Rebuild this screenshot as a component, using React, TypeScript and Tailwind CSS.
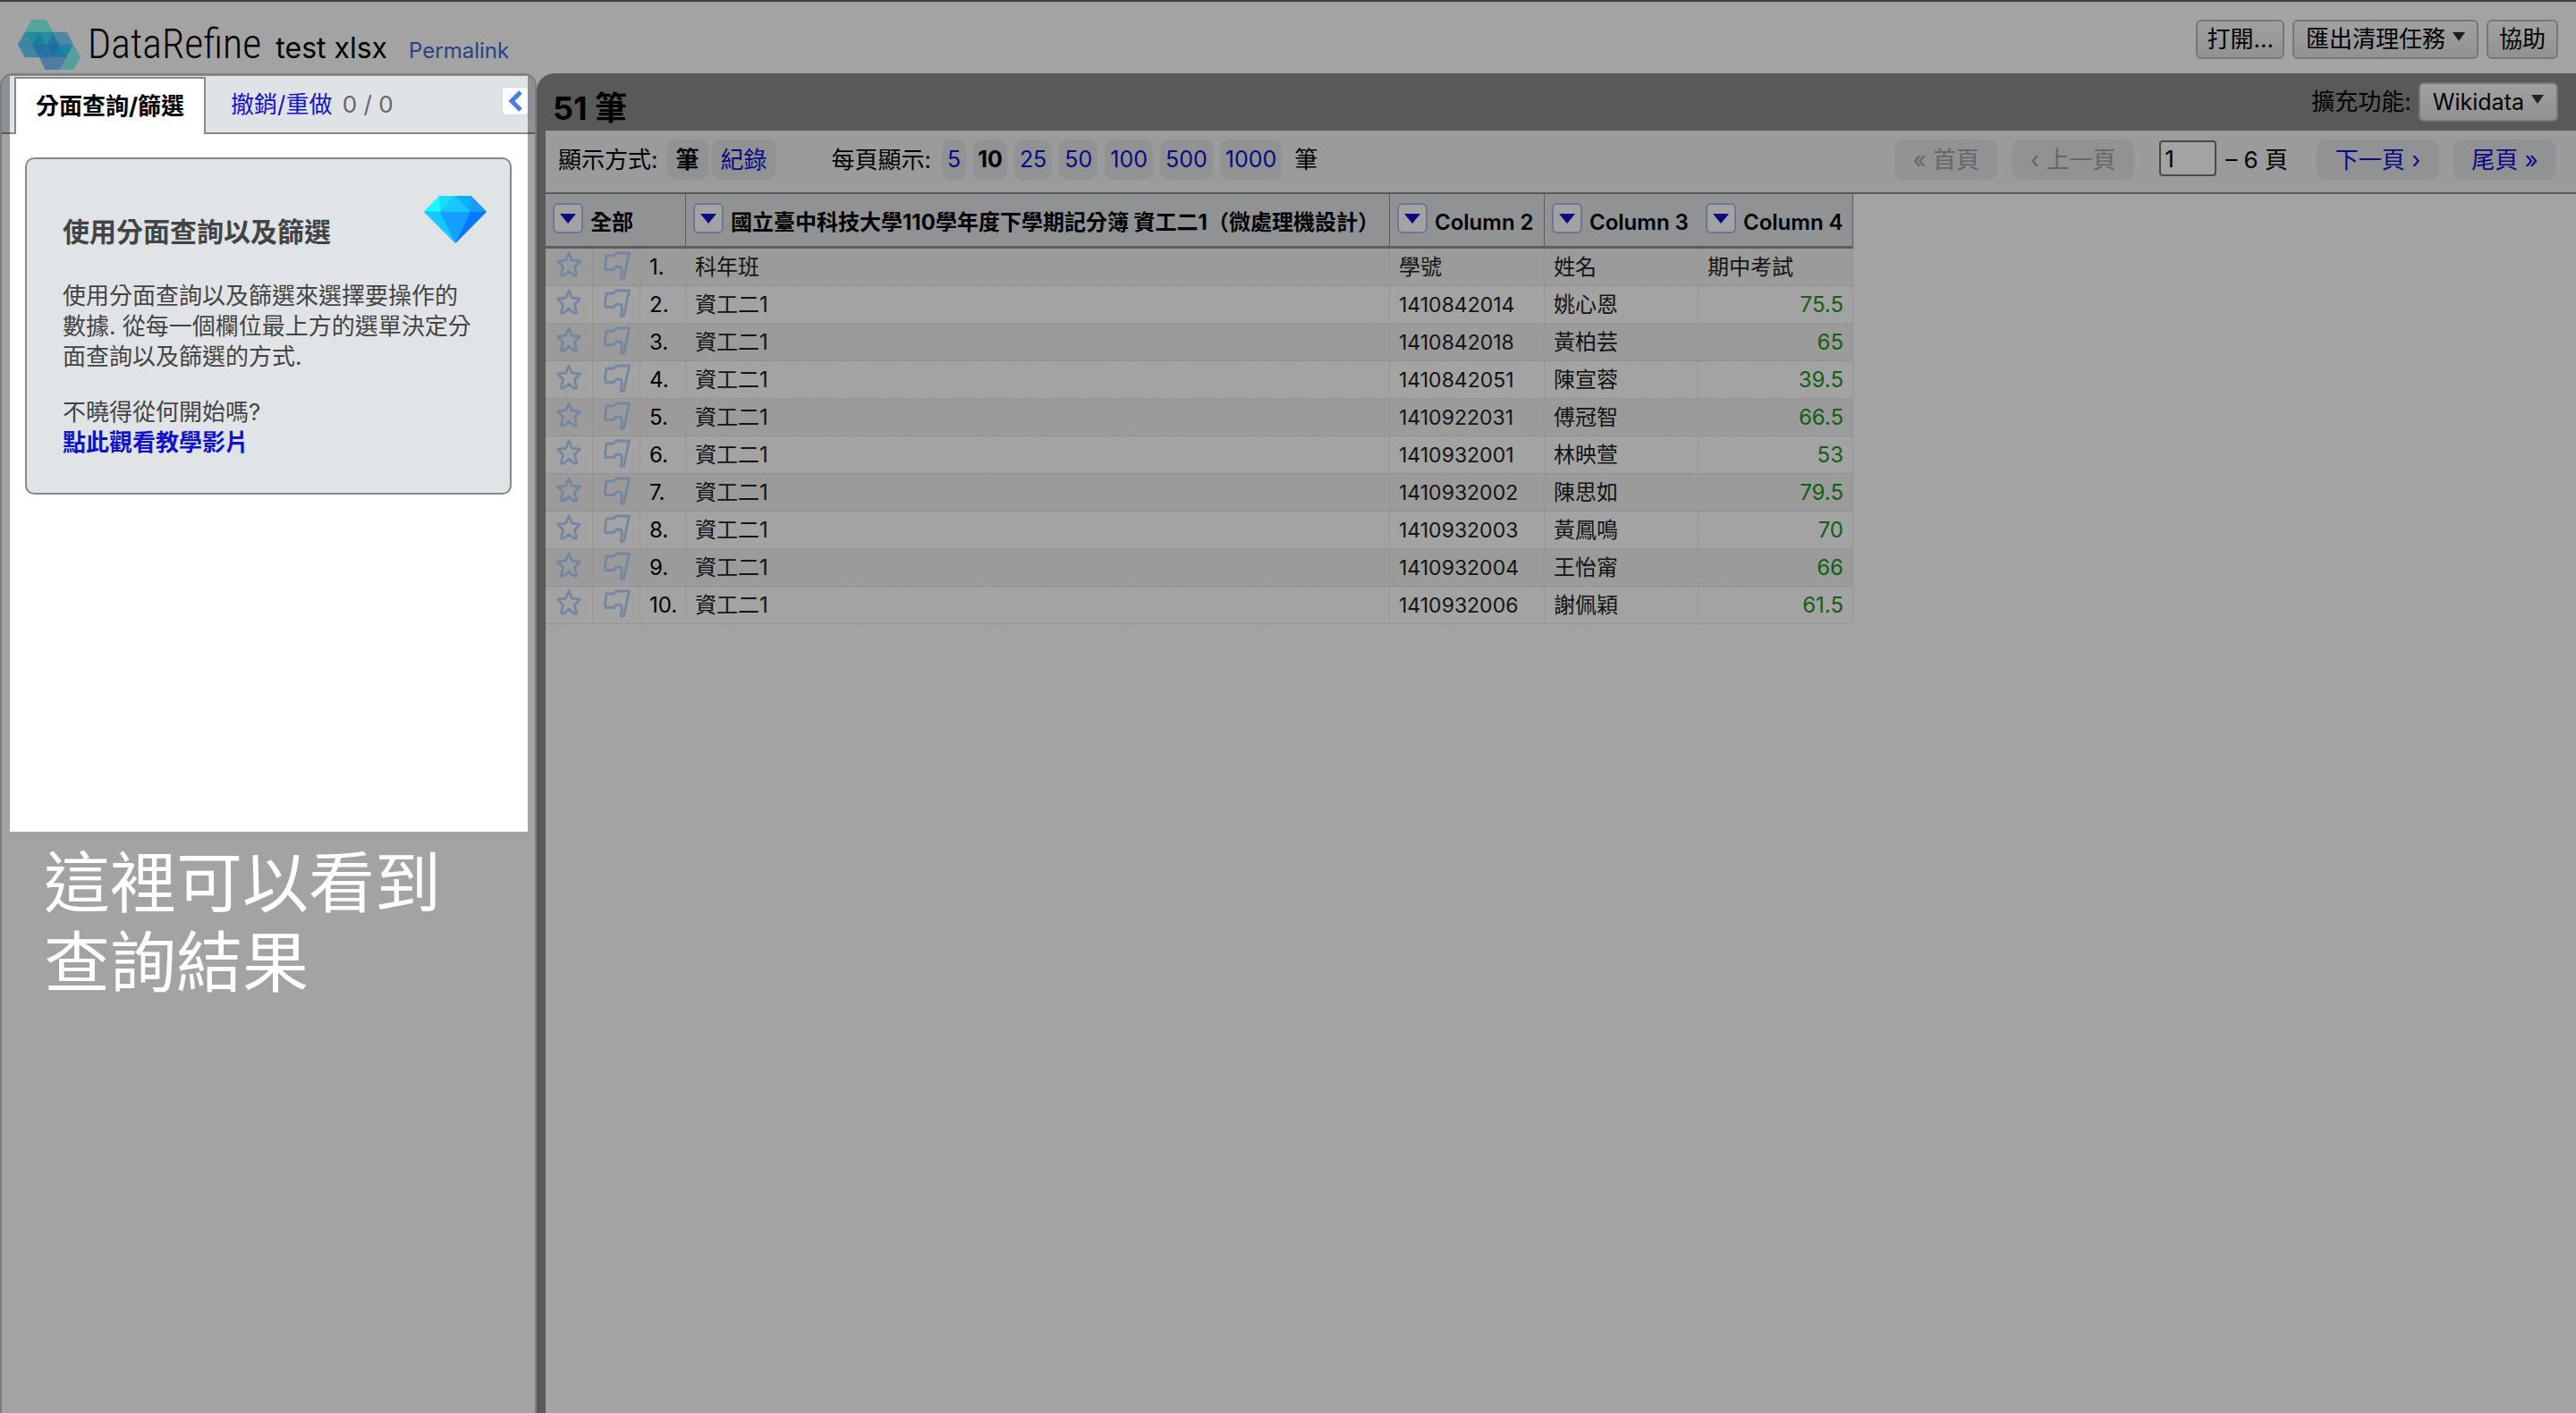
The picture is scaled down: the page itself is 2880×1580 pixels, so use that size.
import React from "react";

const rows = [
  ["科年班", "學號", "姓名", "期中考試"],
  ["資工二1", "1410842014", "姚心恩", "75.5"],
  ["資工二1", "1410842018", "黃柏芸", "65"],
  ["資工二1", "1410842051", "陳宣蓉", "39.5"],
  ["資工二1", "1410922031", "傅冠智", "66.5"],
  ["資工二1", "1410932001", "林映萱", "53"],
  ["資工二1", "1410932002", "陳思如", "79.5"],
  ["資工二1", "1410932003", "黃鳳鳴", "70"],
  ["資工二1", "1410932004", "王怡甯", "66"],
  ["資工二1", "1410932006", "謝佩穎", "61.5"],
];

const logoFaces: [string, string][] = [
  ["76,24 124,24 148,66 54,66", "#88fff8"],
  ["54,66 78,108 30,108", "#64d0ff"],
  ["54,66 102,66 78,108", "#30def8"],
  ["102,66 126,108 78,108", "#28c6f6"],
  ["102,66 148,66 126,108", "#3adefc"],
  ["148,66 170,108 126,108", "#3cbcfa"],
  ["148,66 194,66 216,108 170,108", "#7cd4ff"],
  ["30,108 78,108 102,150 54,150", "#64d0ff"],
  ["78,108 126,108 102,150", "#32b0fe"],
  ["126,108 150,150 102,150", "#4aaeff"],
  ["126,108 170,108 150,150", "#28acff"],
  ["170,108 194,150 150,150", "#30c0f8"],
  ["170,108 216,108 194,150", "#30d2fa"],
  ["216,108 240,150 194,150", "#85fbee"],
  ["102,150 194,150 170,192 122,192", "#7dc2ff"],
  ["194,150 240,150 216,192 170,192", "#85fbee"],
];

function Logo() {
  return (
    <svg className="h-14 w-[70px] shrink-0" viewBox="30 24 210 168" aria-hidden="true">
      {logoFaces.map(([points, fill]) => (
        <polygon key={points} points={points} fill={fill} stroke={fill} strokeWidth="1" />
      ))}
    </svg>
  );
}

function Diamond() {
  return (
    <svg className="h-[53px] w-[70px]" viewBox="42 57 209 158" aria-hidden="true">
      <path d="M94 57H199L251 110L147 215L42 110Z" fill="#14a0ff" />
      <path d="M94 57L42 110H96Z" fill="#18ffff" />
      <path d="M94 57H147L96 110Z" fill="#14deff" />
      <path d="M147 57L198 110H96Z" fill="#16c8ff" />
      <path d="M147 57H199V110Z" fill="#08b0ff" />
      <path d="M199 57L251 110H198Z" fill="#149cff" />
      <path d="M42 110H96L147 215Z" fill="#16c8ff" />
      <path d="M198 110H251L147 215Z" fill="#0878ff" />
    </svg>
  );
}

function Star() {
  return (
    <svg className="block h-[30px] w-[30px]" viewBox="0 0 30 30" fill="none" stroke="#b6d4fa" strokeWidth="2.8" strokeLinejoin="round" aria-hidden="true">
      <path d="M15 2L18.6 10.2L27.5 11.2L21.4 17.4L23.8 27L20.5 27L15 22.2L9.5 27L6.2 27L8.6 17.4L2.5 11.2L11.4 10.2Z" />
    </svg>
  );
}

function Flag() {
  return (
    <svg className="block h-8 w-8" viewBox="0 0 32 32" fill="none" stroke="#b6d4fa" strokeWidth="2.8" strokeLinejoin="round" strokeLinecap="round" aria-hidden="true">
      <path d="M4 5H12L15 2H29.5L27 13L23.5 30L20.5 30.5L20 29L21.5 22L20.5 17.5L15 17L12 20.5H3L2.5 16Z" />
    </svg>
  );
}

function Menu({ label }: { label: string }) {
  return (
    <button aria-label={label} className="flex h-[34px] w-[34px] shrink-0 items-center justify-center rounded-md border-2 border-[#b0b6ec] bg-white">
      <svg className="h-[11px] w-[18px]" viewBox="0 0 18 11" aria-hidden="true">
        <path d="M0 0H18L9 11Z" fill="#1010cc" />
      </svg>
    </button>
  );
}

function Caret() {
  return (
    <svg className="mb-1.5 h-2.5 w-3.5" viewBox="0 0 14 10" aria-hidden="true">
      <path d="M0 0H14L7 10Z" fill="#333" />
    </svg>
  );
}

const toolButton =
  "flex h-11 items-center rounded-md border-2 border-[#bbb] bg-linear-to-b from-[#fbfbfb] to-[#e4e4e4] text-black";
const pill = "flex h-[45px] items-center justify-center rounded-[10px] bg-[#e1e4e8]";
const th = "h-[61px] border-b-3 border-[#8f8f8f] bg-[#e1e4e8] p-0 text-left font-bold";
const td = "h-[42px] border-b border-dotted border-b-[#cfcfcf] border-r border-r-[#dadada] py-0";

function Header() {
  return (
    <header className="flex h-[82px] items-start justify-between border-t-2 border-[#646464] bg-white pr-5 pl-5">
      <div className="flex items-start pt-5">
        <Logo />
        <h1 className="ml-2 flex items-baseline leading-[54px]">
          <a href="#home" className="font-['Liberation_Sans_Narrow','Roboto_Condensed','Roboto'] text-[46px] font-light text-black">
            DataRefine
          </a>
          <span className="ml-4 text-[32px]">test xlsx</span>
          <a href="#permalink" className="ml-6 text-[24px] text-[#3f6ad0]">
            Permalink
          </a>
        </h1>
      </div>
      <div className="flex gap-[9px] pt-5">
        <button className={toolButton + " px-2.5"}>打開...</button>
        <button className={toolButton + " gap-2 px-[13px]"}>
          匯出清理任務
          <Caret />
        </button>
        <button className={toolButton + " px-3"}>協助</button>
      </div>
    </header>
  );
}

function Sidebar() {
  return (
    <aside className="w-[600px] shrink-0 rounded-t-[14px] border-2 border-b-0 border-[#c4c4c4] bg-white">
      <div className="relative flex h-[66px] items-end rounded-t-xl border-b-2 border-[#888] bg-[#dfe3e6] pl-3.5" role="tablist">
        <button role="tab" aria-selected="true" className="-mb-0.5 h-16 border-2 border-b-0 border-[#888] bg-white px-[22px] font-bold">
          分面查詢/篩選
        </button>
        <button role="tab" aria-selected="false" className="h-[62px] px-7 text-[#1414cc]">
          撤銷/重做 <span className="ml-1 text-[#666]">0 / 0</span>
        </button>
        <button
          aria-label="收合"
          className="absolute top-3.5 right-2 flex h-[30px] w-7 items-center justify-center rounded-sm bg-white shadow-[0_0_4px_#c8d8ff]"
        >
          <svg className="h-6 w-4" viewBox="0 0 16 24" fill="none" stroke="#4a7cf0" strokeWidth="5" aria-hidden="true">
            <path d="M14 2L4 12L14 22" />
          </svg>
        </button>
      </div>
      <div className="mx-[26px] mt-[26px] rounded-[10px] border-2 border-[#888] bg-[#e0e4e7] px-10 pb-[39px] text-[#444]">
        <div className="flex h-[136px] justify-between">
          <h2 className="pt-[61px] text-[30px] leading-10 font-bold">使用分面查詢以及篩選</h2>
          <div className="-mr-3.5 pt-[41px]">
            <Diamond />
          </div>
        </div>
        <p className="leading-[34px]">使用分面查詢以及篩選來選擇要操作的數據. 從每一個欄位最上方的選單決定分面查詢以及篩選的方式.</p>
        <p className="mt-7 leading-[34px]">
          不曉得從何開始嗎?
          <br />
          <a href="#tutorial" className="font-bold text-[#1212cc]">
            點此觀看教學影片
          </a>
        </p>
      </div>
    </aside>
  );
}

function Toolbar() {
  return (
    <div className="flex h-[71px] justify-between border-b-2 border-[#8f8f8f] bg-[#f2f2f2] pt-[10px] pr-[22px] pl-3.5">
      <div className="flex items-start leading-[45px]">
        <span>顯示方式:</span>
        <span className={pill + " ml-2.5 px-2.5 font-bold"}>筆</span>
        <a href="#records" className={pill + " ml-1 px-2.5 text-[#1010cc]"}>
          紀錄
        </a>
        <span className="ml-[62px]">每頁顯示:</span>
        <div className="ml-3 flex gap-2 text-[25px]">
          {["5", "10", "25", "50", "100", "500", "1000"].map((n) =>
            n === "10" ? (
              <span key={n} className={pill + " px-[5px] font-bold"}>
                {n}
              </span>
            ) : (
              <a key={n} href={"#size-" + n} className={pill + " px-1.5 text-[#1010cc]"}>
                {n}
              </a>
            ),
          )}
        </div>
        <span className="ml-3.5">筆</span>
      </div>
      <div className="flex items-start leading-[45px]">
        <button disabled className={pill + " w-[115px] text-[#a0a0a0]"}>
          « 首頁
        </button>
        <button disabled className={pill + " ml-4 w-[137px] text-[#a0a0a0]"}>
          ‹ 上一頁
        </button>
        <input
          aria-label="頁"
          defaultValue="1"
          className="mt-px ml-7 h-10 w-16 rounded-sm border-2 border-[#767676] bg-white px-1 leading-8"
        />
        <span className="ml-2.5">– 6 頁</span>
        <a href="#next" className={pill + " ml-8 w-[137px] text-[#1010cc]"}>
          下一頁 ›
        </a>
        <a href="#last" className={pill + " ml-4 w-[115px] text-[#1010cc]"}>
          尾頁 »
        </a>
      </div>
    </div>
  );
}

function DataTable() {
  const heads = ["國立臺中科技大學110學年度下學期記分簿 資工二1（微處理機設計）", "Column 2", "Column 3", "Column 4"];
  return (
    <table className="w-[1462px] table-fixed border-separate border-spacing-0 text-2xl leading-8">
      <colgroup>
        <col className="w-[53px]" />
        <col className="w-[53px]" />
        <col className="w-[51px]" />
        <col className="w-[787px]" />
        <col className="w-[173px]" />
        <col className="w-[172px]" />
        <col className="w-[173px]" />
      </colgroup>
      <thead>
        <tr>
          <th colSpan={3} className={th + " border-r"}>
            <div className="flex items-start pl-2">
              <Menu label="全部" />
              <span className="mt-1.5 ml-2">全部</span>
            </div>
          </th>
          {heads.map((h, i) => (
            <th key={h} className={i === 2 ? th : th + " border-r"}>
              <div className="flex items-start pl-2">
                <Menu label={h} />
                <span className={i ? "mt-1.5 ml-2 font-semibold whitespace-nowrap" : "mt-1.5 ml-2 whitespace-nowrap"}>{h}</span>
              </div>
            </th>
          ))}
        </tr>
      </thead>
      <tbody>
        {rows.map((r, i) => (
          <tr key={r[1]} className={i % 2 ? "bg-white" : "bg-[#f2f2f2]"}>
            <td className={td + " px-0 align-top"}>
              <button aria-label="星號" className="mt-[3px] ml-[11px] block">
                <Star />
              </button>
            </td>
            <td className={td + " px-0 align-top"}>
              <button aria-label="旗標" className="mt-[3px] ml-[11px] block">
                <Flag />
              </button>
            </td>
            <td className={td + " pl-2.5 text-black"}>{i + 1}.</td>
            <td className={td + " px-2.5 text-[#222]"}>{r[0]}</td>
            <td className={(i ? "text-[23px] " : "") + td + " px-2.5 text-[#222]"}>{r[1]}</td>
            <td className={td + " px-2.5 text-[#222]"}>{r[2]}</td>
            <td className={td + (i ? " px-2.5 text-right text-[#229522]" : " px-2.5 text-[#222]")}>{r[3]}</td>
          </tr>
        ))}
      </tbody>
    </table>
  );
}

export default function App() {
  return (
    <div className="relative flex min-h-screen flex-col overflow-hidden bg-white font-['Inter','Noto_Sans_CJK_TC',sans-serif] text-[26px] leading-9 text-black">
      <Header />
      <main className="flex flex-1">
        <Sidebar />
        <section className="flex flex-1 flex-col rounded-tl-[20px] bg-[#8b8b8b] pl-2.5">
          <div className="flex h-16 items-center justify-between pr-5 pl-2">
            <h2 className="pt-3.5 text-[36px] font-bold">51 筆</h2>
            <div className="flex items-center gap-2">
              <span>擴充功能:</span>
              <button className={toolButton + " gap-2 px-3.5 text-[25px]"}>
                Wikidata
                <Caret />
              </button>
            </div>
          </div>
          <Toolbar />
          <div className="flex-1 bg-white">
            <DataTable />
          </div>
        </section>
      </main>
      <div className="pointer-events-none absolute top-[85px] left-[11px] h-[845px] w-[579px] shadow-[0_0_0_4000px_rgba(0,0,0,0.36)]" />
      <p className="absolute top-[943px] left-[49px] w-[460px] text-[74px] leading-[89px] text-white">這裡可以看到查詢結果</p>
    </div>
  );
}
